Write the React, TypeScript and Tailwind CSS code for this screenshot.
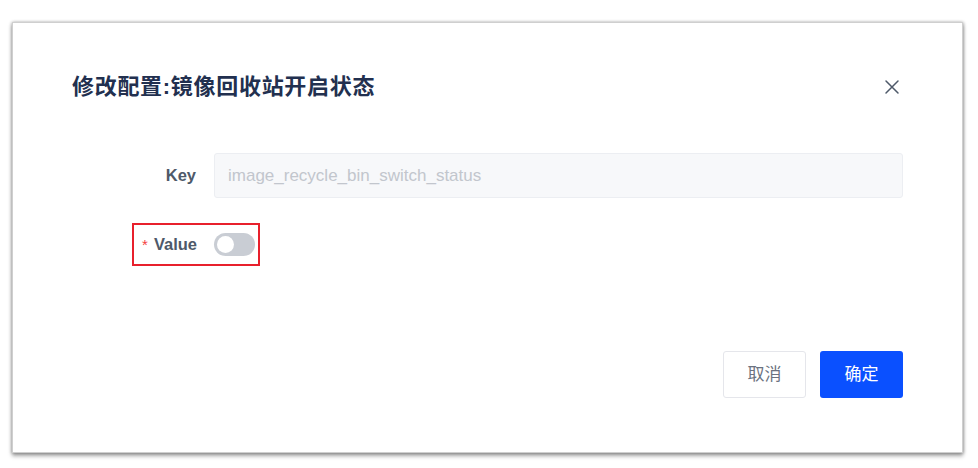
import React from "react";

const cjk = { fontFamily: '"Liberation Sans", "Noto Sans CJK SC", sans-serif' };

export default function App() {
  return (
    <div className="w-[978px] h-[468px] bg-white overflow-hidden" style={cjk}>
      <div className="ml-[12px] mt-[22px] w-[951px] h-[431px] bg-white border border-[#cfcfcf] shadow-[0_3px_4px_rgba(0,0,0,0.35),-1px_0_3px_rgba(0,0,0,0.15),1px_0_3px_rgba(0,0,0,0.2)] flex flex-col">
        <div className="flex items-center justify-between pl-[59px] pr-[62px] pt-[49px]">
          <h1 className="text-[22px] leading-[30px] font-bold text-[#22304f] tracking-[0.7px]">
            修改配置:镜像回收站开启状态
          </h1>
          <svg width="16" height="16" viewBox="0 0 16 16" className="text-[#4e5969]">
            <path d="M2 2 L14 14 M14 2 L2 14" stroke="currentColor" strokeWidth="1.5" strokeLinecap="round" />
          </svg>
        </div>

        <div className="mt-[51px] flex items-center">
          <div className="w-[183px] text-right text-[16.5px] font-bold text-[#4e5969]">Key</div>
          <div className="ml-[18px] w-[689px] h-[45px] bg-[#f7f8fa] border border-[#eceef2] rounded-[3px] flex items-center pl-[13px] text-[17px] text-[#c2c6cd]">
            image_recycle_bin_switch_status
          </div>
        </div>

        <div className="relative mt-[25px] flex items-center h-[42px]">
          <div className="absolute left-[119px] top-0 w-[128px] h-[43px] border-2 border-[#e8202c]" />
          <div className="w-[184px] text-right text-[16.5px] font-bold text-[#4e5969]">
            <span className="text-[#f53f3f] font-normal text-[15px] mr-[6px]">*</span>Value
          </div>
          <div className="ml-[17px] w-[41px] h-[23px] rounded-full bg-[#c9cdd4] flex items-center pl-[3px]">
            <div className="w-[17px] h-[17px] rounded-full bg-white" />
          </div>
        </div>

        <div className="mt-auto mb-[54px] flex justify-end gap-[14px] pr-[59px]">
          <button className="w-[83px] h-[47px] border border-[#e5e6eb] rounded-[3px] bg-white text-[17px] text-[#6b7280]">
            取消
          </button>
          <button className="w-[83px] h-[47px] rounded-[3px] bg-[#0a50ff] text-[17px] text-white">
            确定
          </button>
        </div>
      </div>
    </div>
  );
}
